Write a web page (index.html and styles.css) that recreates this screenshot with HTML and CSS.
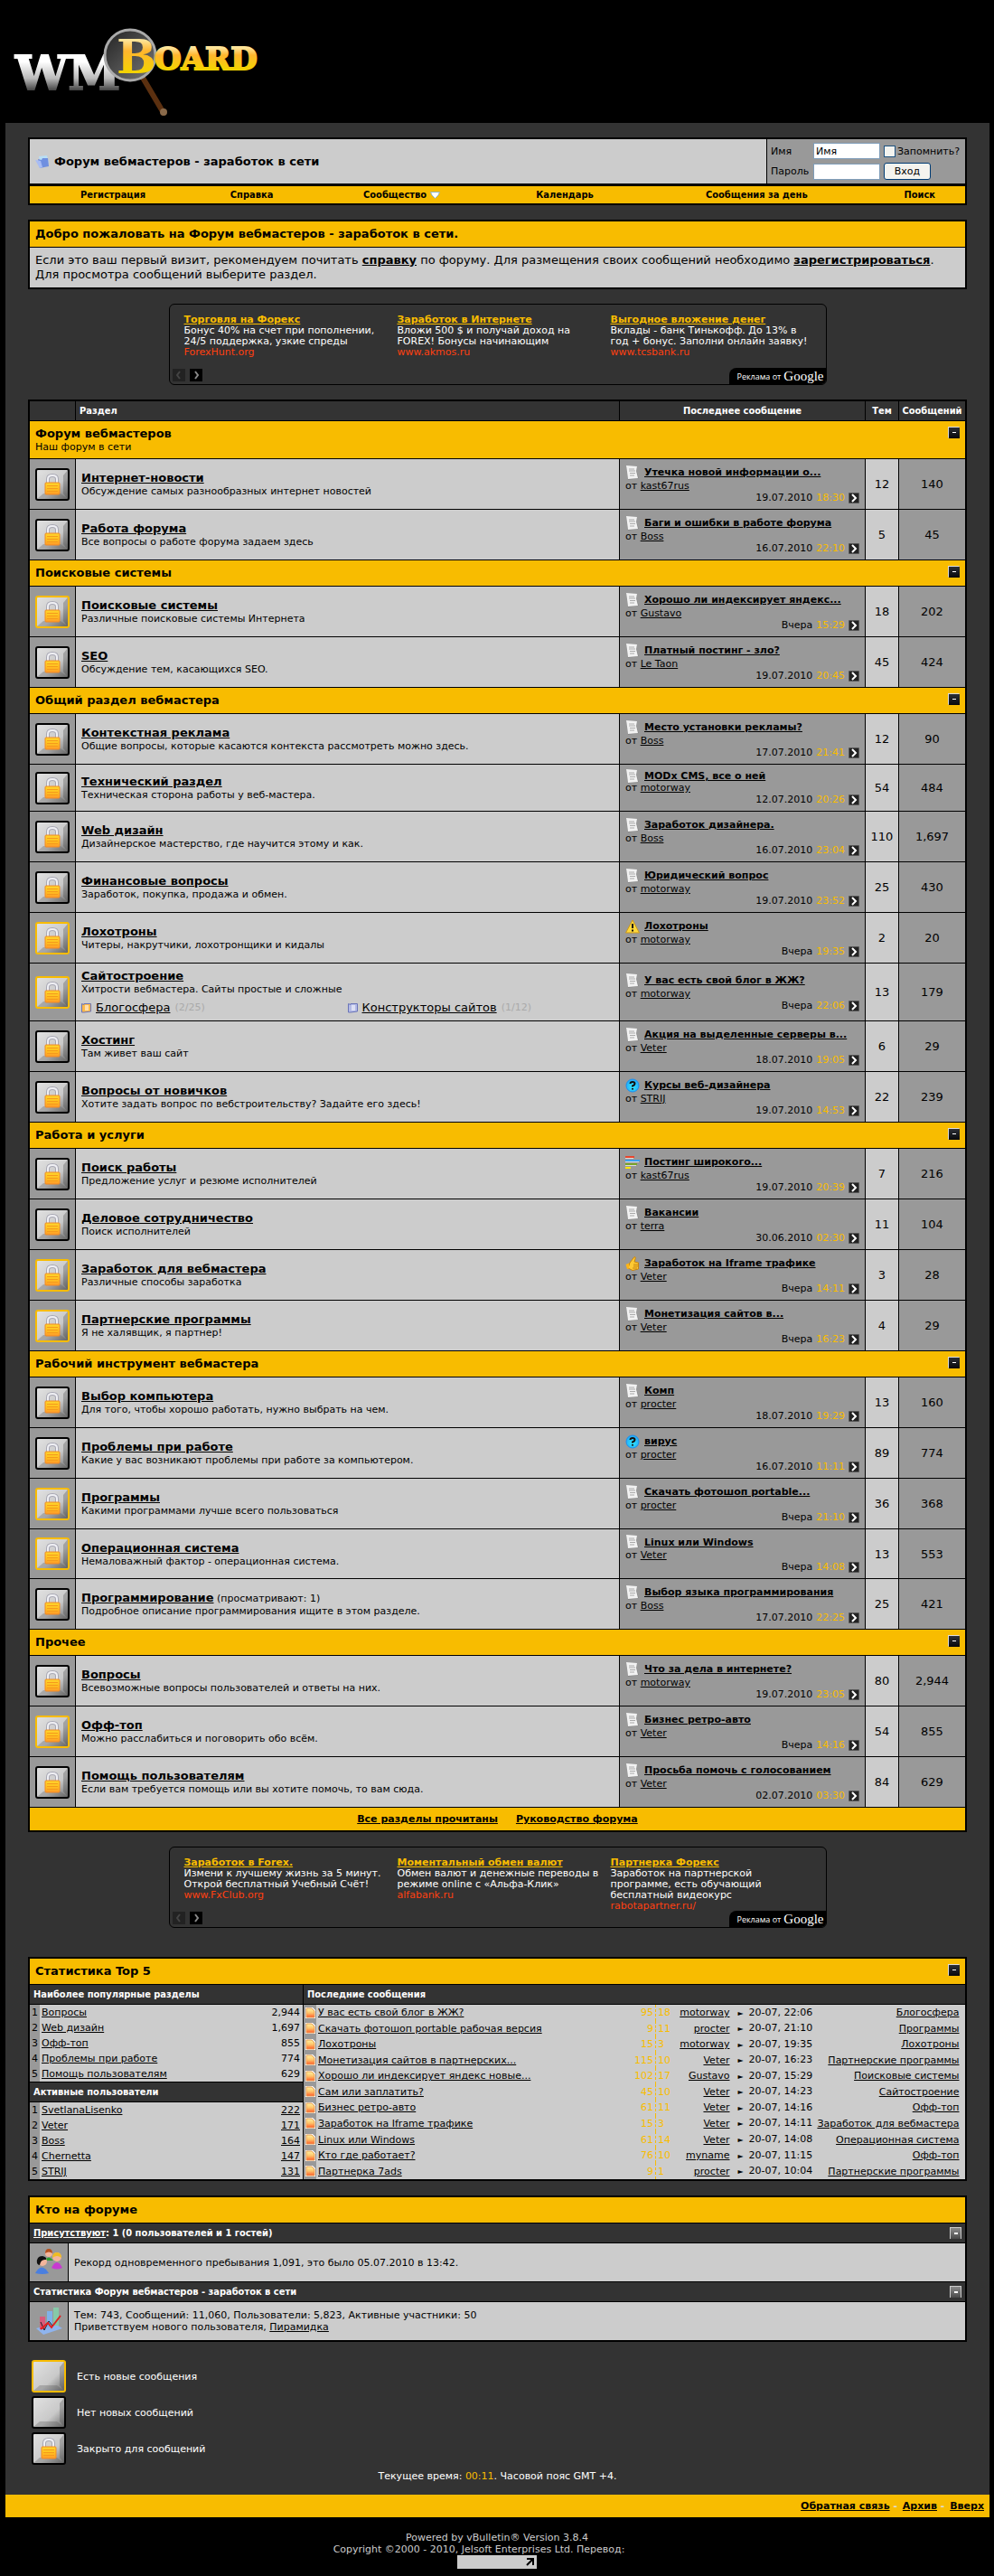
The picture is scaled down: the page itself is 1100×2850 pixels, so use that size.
FILE: index.html
```html
<!DOCTYPE html>
<html lang="ru">
<head>
  <meta charset="UTF-8">
  <title>Форум вебмастеров - заработок в сети</title>
  <link rel="stylesheet" href="styles.css">
</head>
<body>

<!-- icon sprite -->
<svg class="sprite" aria-hidden="true">
  <defs>
    <linearGradient id="tileGrad" x1="0" y1="0" x2="1" y2="1">
      <stop offset="0" stop-color="#e2e2e2"/><stop offset="0.6" stop-color="#c9c9c9"/><stop offset="1" stop-color="#666"/>
    </linearGradient>
    <linearGradient id="lockGrad" x1="0" y1="0" x2="0" y2="1">
      <stop offset="0" stop-color="#ffd52e"/><stop offset="0.5" stop-color="#ffc21f"/><stop offset="1" stop-color="#ff9a2a"/>
    </linearGradient>
    <linearGradient id="darkGrad" x1="0" y1="0" x2="0" y2="1">
      <stop offset="0" stop-color="#2c2f36"/><stop offset="1" stop-color="#08090c"/>
    </linearGradient>
    <linearGradient id="greyGrad" x1="0" y1="0" x2="0" y2="1">
      <stop offset="0" stop-color="#8a8a8a"/><stop offset="1" stop-color="#4a4a4a"/>
    </linearGradient>
    <linearGradient id="fireGrad" x1="0" y1="0" x2="0" y2="1">
      <stop offset="0" stop-color="#fff3a0"/><stop offset="0.5" stop-color="#ffc46a"/><stop offset="1" stop-color="#ff5a2a"/>
    </linearGradient>
    <radialGradient id="blueGrad" cx="0.5" cy="0.6" r="0.6">
      <stop offset="0" stop-color="#2fe6ff"/><stop offset="1" stop-color="#22a8f8"/>
    </radialGradient>
  </defs>
  <symbol id="tile" viewBox="0 0 38 36">
    <rect x="1" y="1" width="36" height="34" rx="2" fill="url(#tileGrad)" stroke="currentColor" stroke-width="2"/>
    <path d="M2 34 L9 28 H28 L36 34 Z" fill="#555" opacity="0.3"/>
    <path d="M36 2 L31 8 V28 L36 34 Z" fill="#444" opacity="0.3"/>
  </symbol>
  <symbol id="tile-lock" viewBox="0 0 38 36">
    <use href="#tile" width="38" height="36"/>
    <path d="M14 16 V12 Q14 8 19 8 Q24 8 24 12 V16" fill="none" stroke="#a8a8b4" stroke-width="4"/>
    <path d="M14 16 V12 Q14 8 19 8 Q24 8 24 12 V16" fill="none" stroke="#f0f0f4" stroke-width="2"/>
    <rect x="11" y="16" width="16" height="13" rx="1" fill="url(#lockGrad)" stroke="#f08a24"/>
    <path d="M13 19.500 H25 M13 22.500 H25 M13 25.500 H25" stroke="#f59a1c" stroke-width="1"/>
  </symbol>
  <symbol id="minus" viewBox="0 0 13 13">
    <path d="M0 13 V0 H13" fill="#ddd"/>
    <rect x="1" y="1" width="12" height="12" fill="url(#darkGrad)"/>
    <rect x="5" y="6" width="4" height="1" fill="#fff"/>
  </symbol>
  <symbol id="minus-grey" viewBox="0 0 13 13">
    <rect x="0" y="0" width="13" height="13" fill="#ccc"/>
    <rect x="1" y="1" width="11" height="12" fill="url(#greyGrad)"/>
    <rect x="5" y="6" width="4" height="2" fill="#fff"/>
  </symbol>
  <symbol id="go" viewBox="0 0 12 12">
    <rect x="0" y="0" width="12" height="12" rx="1" fill="#555"/>
    <rect x="1" y="1" width="10" height="10" fill="#222"/>
    <path d="M4 2 L8 6 L4 10" fill="none" stroke="#fff" stroke-width="2"/>
  </symbol>
  <symbol id="doc" viewBox="0 0 16 16">
    <path d="M1 1 L13 1 L12 5 L15 14 L3 16 L2 8 Z" fill="#777" opacity="0.5"/>
    <path d="M1 0 L13 1 L12 6 L14 14 L3 15 L2 7 Z" fill="#f2f2f2"/>
    <path d="M4 4 H10 M4 6 H11 M5 8.500 H11 M5 11 H10" stroke="#aaa" stroke-width="1"/>
  </symbol>
  <symbol id="warn" viewBox="0 0 16 16">
    <path d="M8 1 L15.500 15 H0.500 Z" fill="#ffd83a" stroke="#c9971a" stroke-linejoin="round"/>
    <path d="M8 5 V10 M8 11.500 V13.500" stroke="#111" stroke-width="2"/>
  </symbol>
  <symbol id="question" viewBox="0 0 16 16">
    <circle cx="8" cy="8" r="7" fill="url(#blueGrad)" stroke="#1b8ff0"/>
    <path d="M5.500 6 Q5.500 4 8 4 Q10.500 4 10.500 6 Q10.500 7.500 8 8.500 V9.500 M8 11 V12.500" fill="none" stroke="#111" stroke-width="2"/>
  </symbol>
  <symbol id="poll" viewBox="0 0 16 16">
    <rect x="0" y="1" width="10" height="2" fill="#e8452c"/><rect x="0" y="5" width="16" height="2" fill="#3aa0ee"/>
    <rect x="0" y="9" width="13" height="2" fill="#7aa52a"/><rect x="0" y="13" width="6" height="2" fill="#ffe600"/>
    <path d="M0 3.500 H9 M0 7.500 H15 M0 11.500 H12" stroke="#ddd"/>
  </symbol>
  <symbol id="thumb" viewBox="0 0 16 16">
    <path d="M5 7 L10 0.500 Q12 0.500 11 3 L10 6 L14.500 7 V14 L8 15.500 L3 13 Z" fill="#ffc933" stroke="#c78410"/>
    <path d="M0.500 9 L4 7.500 V13.500 L2 14 Z" fill="#ffb414"/>
    <path d="M9 9 H14 M9 11 H14 M8 13 H13" stroke="#c78410"/>
  </symbol>
  <symbol id="folder" viewBox="0 0 16 14">
    <path d="M4 1 L13 0 L15 8 L6 10 Z" fill="#b9def5"/>
    <path d="M3 4 L7 5 L8 3 L14 3 L15 12 L5 14 Z" fill="#6f8fe0"/>
    <path d="M0 5 L6 6 L8 13 L5 14 Z" fill="#a8bcf4"/>
  </symbol>
  <symbol id="sub" viewBox="0 0 11 12">
    <path d="M0.500 1.500 L3 2.500 V1.500 H10.500 V10 L3 11 L0.500 11 Z" fill="currentColor" stroke="#6a74b8"/>
    <rect x="4" y="3" width="4" height="6" fill="#fff" opacity="0.55"/>
  </symbol>
  <symbol id="page" viewBox="0 0 11 12">
    <path d="M0 0 H8 L11 3 V12 H0 Z" fill="#fff"/>
    <path d="M1 1 H7 L10 4 V11 H1 Z" fill="url(#fireGrad)" stroke="#e59a50" stroke-width="1"/>
  </symbol>
</svg>

<header class="header">
  <a href="#" class="logo" aria-label="WMBoard">
    <svg width="290" height="120" viewBox="0 0 290 120">
      <defs>
        <linearGradient id="silver" x1="0" y1="0" x2="0" y2="1">
          <stop offset="0.3" stop-color="#fff"/><stop offset="0.6" stop-color="#bbb"/><stop offset="0.85" stop-color="#333"/>
        </linearGradient>
        <linearGradient id="gold" x1="0" y1="0" x2="0" y2="1">
          <stop offset="0.2" stop-color="#ffe59a"/><stop offset="0.4" stop-color="#ffb52e"/><stop offset="0.8" stop-color="#f3d400"/>
        </linearGradient>
        <linearGradient id="glass" x1="0" y1="0" x2="1" y2="1">
          <stop offset="0" stop-color="#222"/><stop offset="1" stop-color="#777"/>
        </linearGradient>
      </defs>
      <path d="M148 78 L171 117" stroke="#5b3010" stroke-width="6" stroke-linecap="round"/>
      <circle cx="171" cy="116" r="4" fill="#8a6a4a"/>
      <text x="7" y="91" class="logo-wm">WM</text>
      <circle cx="134" cy="53" r="28" fill="url(#glass)" stroke="#aaa" stroke-width="3"/>
      <text x="161" y="69" class="logo-oard">OARD</text>
      <text x="119" y="73" class="logo-b">B</text>
    </svg>
  </a>
</header>

<div class="page">

  <div class="navbar">
    <div class="navbar-top">
      <h1 class="crumb"><svg class="folder"><use href="#folder"/></svg>Форум вебмастеров - заработок в сети</h1>
      <form class="login">
        <label for="user">Имя</label>
        <input class="field" type="text" id="user" value="Имя">
        <span class="remember"><input type="checkbox" id="remember"><label for="remember">Запомнить?</label></span>
        <label for="pass">Пароль</label>
        <input class="field" type="password" id="pass">
        <button class="enter" type="submit">Вход</button>
      </form>
    </div>
    <nav class="menu">
      <a href="#">Регистрация</a>
      <a href="#">Справка</a>
      <a href="#">Сообщество <svg width="11" height="8" viewBox="0 0 11 8"><path d="M0.500 0.500 H10.500 L9 4 L5.500 7.500 L2 4 Z" fill="#fff" stroke="#8fb3bd"/></svg></a>
      <a href="#">Календарь</a>
      <a href="#">Сообщения за день</a>
      <a href="#">Поиск</a>
    </nav>
  </div>

  <section class="box welcome">
    <h2 class="tcat">Добро пожаловать на Форум вебмастеров - заработок в сети.</h2>
    <p>Если это ваш первый визит, рекомендуем почитать <a href="#">справку</a> по форуму. Для размещения своих сообщений необходимо <a href="#">зарегистрироваться</a>. Для просмотра сообщений выберите раздел.</p>
  </section>

  <aside class="ads">
    <div class="ad-list">
      <div class="ad"><a href="#">Торговля на Форекс</a><p>Бонус 40% на счет при пополнении,<br>24/5 поддержка, узкие спреды</p><cite>ForexHunt.org</cite></div>
      <div class="ad"><a href="#">Заработок в Интернете</a><p>Вложи 500 $ и получай доход на<br>FOREX! Бонусы начинающим</p><cite>www.akmos.ru</cite></div>
      <div class="ad"><a href="#">Выгодное вложение денег</a><p>Вклады - банк Тинькофф. До 13% в<br>год + бонус. Заполни онлайн заявку!</p><cite>www.tcsbank.ru</cite></div>
    </div>
    <div class="ad-nav">
      <button class="prev" aria-label="Назад"><svg viewBox="0 0 14 14"><path d="M8 3 L5 7 L8 11" fill="none" stroke="currentColor" stroke-width="2"/></svg></button>
      <button aria-label="Вперёд"><svg viewBox="0 0 14 14"><path d="M6 3 L9 7 L6 11" fill="none" stroke="currentColor" stroke-width="2"/></svg></button>
      <a href="#" class="ads-tab">Реклама от <span>Google</span></a>
    </div>
  </aside>

  <table class="box forums">
    <colgroup><col class="c-icon"><col><col class="c-last"><col class="c-num"><col class="c-posts"></colgroup>
    <thead>
      <tr><th></th><th class="left">Раздел</th><th>Последнее сообщение</th><th>Тем</th><th>Сообщений</th></tr>
    </thead>
    <tbody>
      <tr class="cat"><td colspan="5"><svg class="minus"><use href="#minus"/></svg><h2>Форум вебмастеров</h2><p>Наш форум в сети</p></td></tr>
      <tr>
        <td class="icon"><svg class="tile"><use href="#tile-lock"/></svg></td>
        <td class="forum"><a href="#">Интернет-новости</a><p>Обсуждение самых разнообразных интернет новостей</p></td>
        <td class="last"><div class="topic"><svg><use href="#doc"/></svg><a href="#">Утечка новой информации о...</a></div><div>от <a href="#">kast67rus</a></div><div class="date">19.07.2010 <i>18:30</i><svg><use href="#go"/></svg></div></td>
        <td class="num">12</td><td class="posts">140</td>
      </tr>
      <tr>
        <td class="icon"><svg class="tile"><use href="#tile-lock"/></svg></td>
        <td class="forum"><a href="#">Работа форума</a><p>Все вопросы о работе форума задаем здесь</p></td>
        <td class="last"><div class="topic"><svg><use href="#doc"/></svg><a href="#">Баги и ошибки в работе форума</a></div><div>от <a href="#">Boss</a></div><div class="date">16.07.2010 <i>22:10</i><svg><use href="#go"/></svg></div></td>
        <td class="num">5</td><td class="posts">45</td>
      </tr>

      <tr class="cat"><td colspan="5"><svg class="minus"><use href="#minus"/></svg><h2>Поисковые системы</h2></td></tr>
      <tr>
        <td class="icon"><svg class="tile new"><use href="#tile-lock"/></svg></td>
        <td class="forum"><a href="#">Поисковые системы</a><p>Различные поисковые системы Интернета</p></td>
        <td class="last"><div class="topic"><svg><use href="#doc"/></svg><a href="#">Хорошо ли индексирует яндекс...</a></div><div>от <a href="#">Gustavo</a></div><div class="date">Вчера <i>15:29</i><svg><use href="#go"/></svg></div></td>
        <td class="num">18</td><td class="posts">202</td>
      </tr>
      <tr>
        <td class="icon"><svg class="tile"><use href="#tile-lock"/></svg></td>
        <td class="forum"><a href="#">SEO</a><p>Обсуждение тем, касающихся SEO.</p></td>
        <td class="last"><div class="topic"><svg><use href="#doc"/></svg><a href="#">Платный постинг - зло?</a></div><div>от <a href="#">Le Taon</a></div><div class="date">19.07.2010 <i>20:45</i><svg><use href="#go"/></svg></div></td>
        <td class="num">45</td><td class="posts">424</td>
      </tr>

      <tr class="cat"><td colspan="5"><svg class="minus"><use href="#minus"/></svg><h2>Общий раздел вебмастера</h2></td></tr>
      <tr>
        <td class="icon"><svg class="tile"><use href="#tile-lock"/></svg></td>
        <td class="forum"><a href="#">Контекстная реклама</a><p>Общие вопросы, которые касаются контекста рассмотреть можно здесь.</p></td>
        <td class="last"><div class="topic"><svg><use href="#doc"/></svg><a href="#">Место установки рекламы?</a></div><div>от <a href="#">Boss</a></div><div class="date">17.07.2010 <i>21:41</i><svg><use href="#go"/></svg></div></td>
        <td class="num">12</td><td class="posts">90</td>
      </tr>
      <tr>
        <td class="icon"><svg class="tile"><use href="#tile-lock"/></svg></td>
        <td class="forum"><a href="#">Технический раздел</a><p>Техническая сторона работы у веб-мастера.</p></td>
        <td class="last"><div class="topic tight"><svg><use href="#doc"/></svg><a href="#">MODx CMS, все о ней</a></div><div>от <a href="#">motorway</a></div><div class="date">12.07.2010 <i>20:26</i><svg><use href="#go"/></svg></div></td>
        <td class="num">54</td><td class="posts">484</td>
      </tr>
      <tr>
        <td class="icon"><svg class="tile"><use href="#tile-lock"/></svg></td>
        <td class="forum"><a href="#">Web дизайн</a><p>Дизайнерское мастерство, где научится этому и как.</p></td>
        <td class="last"><div class="topic"><svg><use href="#doc"/></svg><a href="#">Заработок дизайнера.</a></div><div>от <a href="#">Boss</a></div><div class="date">16.07.2010 <i>23:04</i><svg><use href="#go"/></svg></div></td>
        <td class="num">110</td><td class="posts">1,697</td>
      </tr>
      <tr>
        <td class="icon"><svg class="tile"><use href="#tile-lock"/></svg></td>
        <td class="forum"><a href="#">Финансовые вопросы</a><p>Заработок, покупка, продажа и обмен.</p></td>
        <td class="last"><div class="topic"><svg><use href="#doc"/></svg><a href="#">Юридический вопрос</a></div><div>от <a href="#">motorway</a></div><div class="date">19.07.2010 <i>23:52</i><svg><use href="#go"/></svg></div></td>
        <td class="num">25</td><td class="posts">430</td>
      </tr>
      <tr>
        <td class="icon"><svg class="tile new"><use href="#tile-lock"/></svg></td>
        <td class="forum"><a href="#">Лохотроны</a><p>Читеры, накрутчики, лохотронщики и кидалы</p></td>
        <td class="last"><div class="topic"><svg><use href="#warn"/></svg><a href="#">Лохотроны</a></div><div>от <a href="#">motorway</a></div><div class="date">Вчера <i>19:35</i><svg><use href="#go"/></svg></div></td>
        <td class="num">2</td><td class="posts">20</td>
      </tr>
      <tr>
        <td class="icon"><svg class="tile new"><use href="#tile-lock"/></svg></td>
        <td class="forum"><a href="#">Сайтостроение</a><p>Хитрости вебмастера. Сайты простые и сложные</p>
          <div class="subs">
            <span><svg class="fresh"><use href="#sub"/></svg><a href="#">Блогосфера</a> <small>(2/25)</small></span>
            <span><svg><use href="#sub"/></svg><a href="#">Конструкторы сайтов</a> <small>(1/12)</small></span>
          </div>
        </td>
        <td class="last"><div class="topic"><svg><use href="#doc"/></svg><a href="#">У вас есть свой блог в ЖЖ?</a></div><div>от <a href="#">motorway</a></div><div class="date">Вчера <i>22:06</i><svg><use href="#go"/></svg></div></td>
        <td class="num">13</td><td class="posts">179</td>
      </tr>
      <tr>
        <td class="icon"><svg class="tile"><use href="#tile-lock"/></svg></td>
        <td class="forum"><a href="#">Хостинг</a><p>Там живет ваш сайт</p></td>
        <td class="last"><div class="topic"><svg><use href="#doc"/></svg><a href="#">Акция на выделенные серверы в...</a></div><div>от <a href="#">Veter</a></div><div class="date">18.07.2010 <i>19:05</i><svg><use href="#go"/></svg></div></td>
        <td class="num">6</td><td class="posts">29</td>
      </tr>
      <tr>
        <td class="icon"><svg class="tile"><use href="#tile-lock"/></svg></td>
        <td class="forum"><a href="#">Вопросы от новичков</a><p>Хотите задать вопрос по вебстроительству? Задайте его здесь!</p></td>
        <td class="last"><div class="topic"><svg><use href="#question"/></svg><a href="#">Курсы веб-дизайнера</a></div><div>от <a href="#">STRIJ</a></div><div class="date">19.07.2010 <i>14:53</i><svg><use href="#go"/></svg></div></td>
        <td class="num">22</td><td class="posts">239</td>
      </tr>

      <tr class="cat"><td colspan="5"><svg class="minus"><use href="#minus"/></svg><h2>Работа и услуги</h2></td></tr>
      <tr>
        <td class="icon"><svg class="tile"><use href="#tile-lock"/></svg></td>
        <td class="forum"><a href="#">Поиск работы</a><p>Предложение услуг и резюме исполнителей</p></td>
        <td class="last"><div class="topic"><svg><use href="#poll"/></svg><a href="#">Постинг широкого...</a></div><div>от <a href="#">kast67rus</a></div><div class="date">19.07.2010 <i>20:39</i><svg><use href="#go"/></svg></div></td>
        <td class="num">7</td><td class="posts">216</td>
      </tr>
      <tr>
        <td class="icon"><svg class="tile"><use href="#tile-lock"/></svg></td>
        <td class="forum"><a href="#">Деловое сотрудничество</a><p>Поиск исполнителей</p></td>
        <td class="last"><div class="topic"><svg><use href="#doc"/></svg><a href="#">Вакансии</a></div><div>от <a href="#">terra</a></div><div class="date">30.06.2010 <i>02:30</i><svg><use href="#go"/></svg></div></td>
        <td class="num">11</td><td class="posts">104</td>
      </tr>
      <tr>
        <td class="icon"><svg class="tile new"><use href="#tile-lock"/></svg></td>
        <td class="forum"><a href="#">Заработок для вебмастера</a><p>Различные способы заработка</p></td>
        <td class="last"><div class="topic"><svg><use href="#thumb"/></svg><a href="#">Заработок на Iframe трафике</a></div><div>от <a href="#">Veter</a></div><div class="date">Вчера <i>14:11</i><svg><use href="#go"/></svg></div></td>
        <td class="num">3</td><td class="posts">28</td>
      </tr>
      <tr>
        <td class="icon"><svg class="tile new"><use href="#tile-lock"/></svg></td>
        <td class="forum"><a href="#">Партнерские программы</a><p>Я не халявщик, я партнер!</p></td>
        <td class="last"><div class="topic"><svg><use href="#doc"/></svg><a href="#">Монетизация сайтов в...</a></div><div>от <a href="#">Veter</a></div><div class="date">Вчера <i>16:23</i><svg><use href="#go"/></svg></div></td>
        <td class="num">4</td><td class="posts">29</td>
      </tr>

      <tr class="cat"><td colspan="5"><svg class="minus"><use href="#minus"/></svg><h2>Рабочий инструмент вебмастера</h2></td></tr>
      <tr>
        <td class="icon"><svg class="tile"><use href="#tile-lock"/></svg></td>
        <td class="forum"><a href="#">Выбор компьютера</a><p>Для того, чтобы хорошо работать, нужно выбрать на чем.</p></td>
        <td class="last"><div class="topic"><svg><use href="#doc"/></svg><a href="#">Комп</a></div><div>от <a href="#">procter</a></div><div class="date">18.07.2010 <i>19:29</i><svg><use href="#go"/></svg></div></td>
        <td class="num">13</td><td class="posts">160</td>
      </tr>
      <tr>
        <td class="icon"><svg class="tile"><use href="#tile-lock"/></svg></td>
        <td class="forum"><a href="#">Проблемы при работе</a><p>Какие у вас возникают проблемы при работе за компьютером.</p></td>
        <td class="last"><div class="topic"><svg><use href="#question"/></svg><a href="#">вирус</a></div><div>от <a href="#">procter</a></div><div class="date">16.07.2010 <i>11:11</i><svg><use href="#go"/></svg></div></td>
        <td class="num">89</td><td class="posts">774</td>
      </tr>
      <tr>
        <td class="icon"><svg class="tile new"><use href="#tile-lock"/></svg></td>
        <td class="forum"><a href="#">Программы</a><p>Какими программами лучше всего пользоваться</p></td>
        <td class="last"><div class="topic"><svg><use href="#doc"/></svg><a href="#">Скачать фотошоп portable...</a></div><div>от <a href="#">procter</a></div><div class="date">Вчера <i>21:10</i><svg><use href="#go"/></svg></div></td>
        <td class="num">36</td><td class="posts">368</td>
      </tr>
      <tr>
        <td class="icon"><svg class="tile new"><use href="#tile-lock"/></svg></td>
        <td class="forum"><a href="#">Операционная система</a><p>Немаловажный фактор - операционная система.</p></td>
        <td class="last"><div class="topic snug"><svg><use href="#doc"/></svg><a href="#">Linux или Windows</a></div><div>от <a href="#">Veter</a></div><div class="date">Вчера <i>14:08</i><svg><use href="#go"/></svg></div></td>
        <td class="num">13</td><td class="posts">553</td>
      </tr>
      <tr>
        <td class="icon"><svg class="tile"><use href="#tile-lock"/></svg></td>
        <td class="forum"><a href="#">Программирование</a> (просматривают: 1)<p>Подробное описание программирования ищите в этом разделе.</p></td>
        <td class="last"><div class="topic"><svg><use href="#doc"/></svg><a href="#">Выбор языка программирования</a></div><div>от <a href="#">Boss</a></div><div class="date">17.07.2010 <i>22:25</i><svg><use href="#go"/></svg></div></td>
        <td class="num">25</td><td class="posts">421</td>
      </tr>

      <tr class="cat"><td colspan="5"><svg class="minus"><use href="#minus"/></svg><h2>Прочее</h2></td></tr>
      <tr>
        <td class="icon"><svg class="tile"><use href="#tile-lock"/></svg></td>
        <td class="forum"><a href="#">Вопросы</a><p>Всевозможные вопросы пользователей и ответы на них.</p></td>
        <td class="last"><div class="topic"><svg><use href="#doc"/></svg><a href="#">Что за дела в интернете?</a></div><div>от <a href="#">motorway</a></div><div class="date">19.07.2010 <i>23:05</i><svg><use href="#go"/></svg></div></td>
        <td class="num">80</td><td class="posts">2,944</td>
      </tr>
      <tr>
        <td class="icon"><svg class="tile new"><use href="#tile-lock"/></svg></td>
        <td class="forum"><a href="#">Офф-топ</a><p>Можно расслабиться и поговорить обо всём.</p></td>
        <td class="last"><div class="topic"><svg><use href="#doc"/></svg><a href="#">Бизнес ретро-авто</a></div><div>от <a href="#">Veter</a></div><div class="date">Вчера <i>14:16</i><svg><use href="#go"/></svg></div></td>
        <td class="num">54</td><td class="posts">855</td>
      </tr>
      <tr>
        <td class="icon"><svg class="tile"><use href="#tile-lock"/></svg></td>
        <td class="forum"><a href="#">Помощь пользователям</a><p>Если вам требуется помощь или вы хотите помочь, то вам сюда.</p></td>
        <td class="last"><div class="topic"><svg><use href="#doc"/></svg><a href="#">Просьба помочь с голосованием</a></div><div>от <a href="#">Veter</a></div><div class="date">02.07.2010 <i>03:30</i><svg><use href="#go"/></svg></div></td>
        <td class="num">84</td><td class="posts">629</td>
      </tr>
    </tbody>
    <tfoot>
      <tr><td colspan="5"><a href="#">Все разделы прочитаны</a><a href="#">Руководство форума</a></td></tr>
    </tfoot>
  </table>

  <aside class="ads ads-bottom">
    <div class="ad-list">
      <div class="ad"><a href="#">Заработок в Forex.</a><p>Измени к лучшему жизнь за 5 минут.<br>Открой бесплатный Учебный Счёт!</p><cite>www.FxClub.org</cite></div>
      <div class="ad"><a href="#">Моментальный обмен валют</a><p>Обмен валют и денежные переводы в<br>режиме online с «Альфа-Клик»</p><cite>alfabank.ru</cite></div>
      <div class="ad"><a href="#">Партнерка Форекс</a><p>Заработок на партнерской<br>программе, есть обучающий<br>бесплатный видеокурс</p><cite>rabotapartner.ru/</cite></div>
    </div>
    <div class="ad-nav">
      <button class="prev" aria-label="Назад"><svg viewBox="0 0 14 14"><path d="M8 3 L5 7 L8 11" fill="none" stroke="currentColor" stroke-width="2"/></svg></button>
      <button aria-label="Вперёд"><svg viewBox="0 0 14 14"><path d="M6 3 L9 7 L6 11" fill="none" stroke="currentColor" stroke-width="2"/></svg></button>
      <a href="#" class="ads-tab">Реклама от <span>Google</span></a>
    </div>
  </aside>

  <section class="box stats">
    <h2 class="tcat">Статистика Top 5<svg class="minus"><use href="#minus"/></svg></h2>
    <div class="stats-body">
      <div class="top5">
        <h3 class="thead">Наиболее популярные разделы</h3>
        <table>
          <tr><td>1</td><td><a href="#">Вопросы</a></td><td>2,944</td></tr>
          <tr><td>2</td><td><a href="#">Web дизайн</a></td><td>1,697</td></tr>
          <tr><td>3</td><td><a href="#">Офф-топ</a></td><td>855</td></tr>
          <tr><td>4</td><td><a href="#">Проблемы при работе</a></td><td>774</td></tr>
          <tr><td>5</td><td><a href="#">Помощь пользователям</a></td><td>629</td></tr>
        </table>
        <h3 class="thead">Активные пользователи</h3>
        <table>
          <tr><td>1</td><td><a href="#">SvetlanaLisenko</a></td><td><a href="#">222</a></td></tr>
          <tr><td>2</td><td><a href="#">Veter</a></td><td><a href="#">171</a></td></tr>
          <tr><td>3</td><td><a href="#">Boss</a></td><td><a href="#">164</a></td></tr>
          <tr><td>4</td><td><a href="#">Chernetta</a></td><td><a href="#">147</a></td></tr>
          <tr><td>5</td><td><a href="#">STRIJ</a></td><td><a href="#">131</a></td></tr>
        </table>
      </div>
      <div class="recent">
        <h3 class="thead">Последние сообщения</h3>
        <table>
          <colgroup><col class="r-icon"><col><col class="r-views"><col class="r-replies"><col class="r-user"><col class="r-time"><col class="r-forum"></colgroup>
          <tr><td><svg><use href="#page"/></svg></td><td><a href="#">У вас есть свой блог в ЖЖ?</a></td><td>95</td><td>18</td><td><a href="#">motorway</a></td><td><b>►</b>20-07, 22:06</td><td><a href="#">Блогосфера</a></td></tr>
          <tr><td><svg><use href="#page"/></svg></td><td><a href="#">Скачать фотошоп portable рабочая версия</a></td><td>9</td><td>11</td><td><a href="#">procter</a></td><td><b>►</b>20-07, 21:10</td><td><a href="#">Программы</a></td></tr>
          <tr><td><svg><use href="#page"/></svg></td><td><a href="#">Лохотроны</a></td><td>15</td><td>3</td><td><a href="#">motorway</a></td><td><b>►</b>20-07, 19:35</td><td><a href="#">Лохотроны</a></td></tr>
          <tr><td><svg><use href="#page"/></svg></td><td><a href="#">Монетизация сайтов в партнерских...</a></td><td>115</td><td>10</td><td><a href="#">Veter</a></td><td><b>►</b>20-07, 16:23</td><td><a href="#">Партнерские программы</a></td></tr>
          <tr><td><svg><use href="#page"/></svg></td><td><a href="#">Хорошо ли индексирует яндекс новые...</a></td><td>102</td><td>17</td><td><a href="#">Gustavo</a></td><td><b>►</b>20-07, 15:29</td><td><a href="#">Поисковые системы</a></td></tr>
          <tr><td><svg><use href="#page"/></svg></td><td><a href="#">Сам или заплатить?</a></td><td>45</td><td>10</td><td><a href="#">Veter</a></td><td><b>►</b>20-07, 14:23</td><td><a href="#">Сайтостроение</a></td></tr>
          <tr><td><svg><use href="#page"/></svg></td><td><a href="#">Бизнес ретро-авто</a></td><td>61</td><td>11</td><td><a href="#">Veter</a></td><td><b>►</b>20-07, 14:16</td><td><a href="#">Офф-топ</a></td></tr>
          <tr><td><svg><use href="#page"/></svg></td><td><a href="#">Заработок на Iframe трафике</a></td><td>15</td><td>3</td><td><a href="#">Veter</a></td><td><b>►</b>20-07, 14:11</td><td><a href="#">Заработок для вебмастера</a></td></tr>
          <tr><td><svg><use href="#page"/></svg></td><td><a href="#">Linux или Windows</a></td><td>61</td><td>14</td><td><a href="#">Veter</a></td><td><b>►</b>20-07, 14:08</td><td><a href="#">Операционная система</a></td></tr>
          <tr><td><svg><use href="#page"/></svg></td><td><a href="#">Кто где работает?</a></td><td>76</td><td>10</td><td><a href="#">myname</a></td><td><b>►</b>20-07, 11:15</td><td><a href="#">Офф-топ</a></td></tr>
          <tr><td><svg><use href="#page"/></svg></td><td><a href="#">Партнерка 7ads</a></td><td>9</td><td>1</td><td><a href="#">procter</a></td><td><b>►</b>20-07, 10:04</td><td><a href="#">Партнерские программы</a></td></tr>
        </table>
      </div>
    </div>
  </section>

  <section class="box who">
    <h2 class="tcat">Кто на форуме</h2>
    <h3 class="thead"><span><a href="#">Присутствуют</a>: 1 (0 пользователей и 1 гостей)</span><svg class="minus"><use href="#minus-grey"/></svg></h3>
    <div class="who-row">
      <div class="who-icon">
        <svg width="30" height="28" viewBox="0 0 30 28">
          <path d="M10 13 Q15 6 20 13 Z" fill="#2f9e2f"/><circle cx="15" cy="5" r="4" fill="#f3b59b"/><path d="M11 5 Q11 0 15 0 Q19 0 19 5 Q15 2 11 5" fill="#b5501c"/>
          <path d="M18 21 Q24 9 30 21 Q24 24 18 21 Z" fill="#c83ad0"/><circle cx="24" cy="9" r="5" fill="#f3b59b"/><path d="M19 10 Q19 4 24 4 Q29 4 29 10 Q24 6 19 10" fill="#eebc22"/>
          <path d="M0 27 Q7 14 15 27 Q8 29 0 27 Z" fill="#4a7fe0"/><circle cx="8" cy="14" r="5" fill="#f3b59b"/><path d="M2 16 Q1 8 8 8 Q13 9 12 12 Q6 11 5 18 Q3 18 2 16" fill="#111"/>
        </svg>
      </div>
      <p>Рекорд одновременного пребывания 1,091, это было 05.07.2010 в 13:42.</p>
    </div>
    <h3 class="thead"><span>Статистика Форум вебмастеров - заработок в сети</span><svg class="minus"><use href="#minus-grey"/></svg></h3>
    <div class="who-row">
      <div class="who-icon">
        <svg width="30" height="30" viewBox="0 0 30 30">
          <path d="M1 23 L22 18 L30 23 L9 30 Z" fill="#8fb4ee"/>
          <rect x="5" y="10" width="6" height="14" fill="#d95a7a"/><rect x="13" y="4" width="6" height="18" fill="#7fb2ea"/><rect x="20" y="0" width="6" height="20" fill="#86c9a8"/>
          <path d="M6 16 L10 25 L15 15 L19 20" fill="none" stroke="#222" stroke-width="1"/>
          <path d="M6 24 L14 17 L18 22 L28 9" fill="none" stroke="#e02020" stroke-width="2"/>
        </svg>
      </div>
      <p>Тем: 743, Сообщений: 11,060, Пользователи: 5,823, Активные участники: 50<br>Приветствуем нового пользователя, <a href="#">Пирамидка</a></p>
    </div>
  </section>

  <ul class="legend">
    <li><svg class="tile new"><use href="#tile"/></svg>Есть новые сообщения</li>
    <li><svg class="tile"><use href="#tile"/></svg>Нет новых сообщений</li>
    <li><svg class="tile"><use href="#tile-lock"/></svg>Закрыто для сообщений</li>
  </ul>

  <p class="clock">Текущее время: <i>00:11</i>. Часовой пояс GMT +4.</p>

  <div class="bottom-bar"><a href="#">Обратная связь</a> - <a href="#">Архив</a> - <a href="#">Вверх</a></div>
</div>

<footer class="footer">
  <p>Powered by vBulletin® Version 3.8.4</p>
  <p class="copyright">Copyright ©2000 - 2010, Jelsoft Enterprises Ltd. Перевод:</p>
  <a href="#" class="badge" aria-label="Перевод"><svg width="9" height="9" viewBox="0 0 9 9"><path d="M1 1 H8 V8 M8 1 L1 8" fill="none" stroke="#000" stroke-width="2"/></svg></a>
</footer>

</body>
</html>
```
FILE: styles.css
```css
* { box-sizing: border-box; }
body {
  margin: 0;
  background: #000;
  color: #000;
  font-family: Verdana, "DejaVu Sans", sans-serif;
  font-size: 11px;
  line-height: 13px;
}
h1, h2, h3, p, ul { margin: 0; padding: 0; font-size: inherit; }
a { color: inherit; }
svg { display: block; flex: none; }
i, cite { font-style: normal; }
button { cursor: pointer; padding: 0; }
.sprite { position: absolute; width: 0; height: 0; }

/* header */
.header { padding: 8px 10px; height: 136px; }
.logo { display: inline-block; }
.logo-wm { font: bold 52px "DejaVu Serif", serif; fill: url(#silver); stroke: url(#silver); stroke-width: 2px; }
.logo-oard { font: bold 34px "DejaVu Serif", serif; fill: url(#gold); stroke: url(#gold); stroke-width: 2px; }
.logo-b { font: bold 52px "DejaVu Serif", serif; fill: url(#gold); }

.page {
  margin: 0 5px 0 6px;
  padding-top: 16px;
  background: #333;
}
.box {
  margin: 0 25px 16px;
  border: 2px solid #000;
  background: #000;
}
.tcat {
  display: flex;
  justify-content: space-between;
  padding: 6px;
  background: #f8bc00;
  font-size: 13px;
  line-height: 16px;
}
.thead, .forums th, .menu {
  font-family: Tahoma, "DejaVu Sans Condensed", sans-serif;
  font-size: 11px;
  font-weight: bold;
}
.thead {
  display: flex;
  justify-content: space-between;
  padding: 4px;
  background: #333;
  color: #fff;
}
.minus { width: 13px; height: 13px; }

/* navbar */
.navbar {
  margin: 0 25px 16px;
  border: 2px solid #000;
  background: #000;
}
.navbar-top {
  display: flex;
  gap: 1px;
  margin-bottom: 3px;
}
.crumb {
  flex: 1;
  display: flex;
  align-items: center;
  gap: 5px;
  padding: 6px;
  background: #ccc;
  font-size: 13px;
}
.folder { width: 16px; height: 14px; }
.login {
  display: grid;
  grid-template-columns: 43px 74px auto;
  align-items: center;
  gap: 4px;
  padding: 4px;
  width: 219px;
  background: #999;
}
.field {
  width: 74px;
  height: 18px;
  padding: 0 2px;
  border: 1px solid #7f9db9;
  background: #fff;
  font: inherit;
}
.remember { display: flex; align-items: center; gap: 2px; }
.remember input {
  appearance: none;
  width: 13px;
  height: 13px;
  margin: 0;
  border: 1px solid #1d5281;
  background: #f3f3ef;
}
.enter {
  width: 52px;
  height: 19px;
  border: 1px solid #003c74;
  border-radius: 3px;
  background: #f4f3ee;
  color: #000;
  font: inherit;
}
.menu {
  display: grid;
  grid-template-columns: 179fr 130fr 204fr 159fr 268fr 95fr;
  padding: 3px;
  background: #f8bc00;
}
.menu a {
  display: flex;
  justify-content: center;
  align-items: center;
  gap: 4px;
  text-decoration: none;
}

/* welcome */
.welcome p {
  margin-top: 1px;
  padding: 6px;
  background: #ccc;
  font-size: 13px;
  line-height: 16px;
}
.welcome a { font-weight: bold; }

/* ads */
.ads {
  width: 728px;
  height: 90px;
  margin: 0 auto 16px;
  border: 1px solid #000;
  border-radius: 6px;
  display: flex;
  flex-direction: column;
  justify-content: space-between;
  overflow: hidden;
}
.ads-bottom { margin-bottom: 32px; }
.ad-list { display: flex; height: 70px; padding: 10px 0 0 16px; }
.ad { width: 236px; color: #fff; line-height: 12px; }
.ad a { color: #f8bc00; font-weight: bold; line-height: 13px; }
.ad cite { color: #ff4010; }
.ad-nav { display: flex; align-items: flex-end; gap: 5px; padding-left: 3px; height: 18px; }
.ad-nav button {
  width: 14px;
  height: 14px;
  margin-bottom: 3px;
  border: 0;
  background: #000;
  color: #888;
}
.ad-nav .prev { background: #222; color: #444; }
.ads-tab {
  display: flex;
  align-items: center;
  gap: 3px;
  height: 18px;
  margin-left: auto;
  padding: 0 2px 0 8px;
  border-radius: 8px 0 0 0;
  background: #000;
  color: #fff;
  font-family: "Open Sans", sans-serif;
  font-size: 9px;
  text-decoration: none;
}
.ads-tab span { font-family: "Liberation Serif", serif; font-size: 15px; }

/* forum list */
.forums {
  width: calc(100% - 50px);
  border: 1px solid #000;
  border-spacing: 1px;
  table-layout: fixed;
}
.c-icon { width: 50px; }
.c-last { width: 271px; }
.c-num { width: 36px; }
.c-posts { width: 73px; }
.forums th {
  padding: 4px 0;
  background: #333;
  color: #fff;
}
.forums .left { padding-left: 4px; text-align: left; }
.forums td { padding: 6px; background: #ccc; }
.forums .cat td, .forums tfoot td { background: #f8bc00; }
.cat h2, .forum > a { font-size: 13px; line-height: 16px; font-weight: bold; }
.cat .minus { float: right; }
.forums td.icon, .forums td.last, .forums td.posts { background: #999; }
.forums .tile { width: 38px; height: 36px; }
.tile { color: #000; }
.tile.new { color: #f8bc00; }
.topic { display: flex; align-items: center; gap: 5px; height: 17px; }
.topic.tight { height: 13px; }
.topic.snug { height: 16px; }
.topic svg { width: 16px; height: 16px; }
.topic a { font-weight: bold; white-space: nowrap; }
.date { display: flex; justify-content: flex-end; align-items: center; gap: 4px; }
.date i, .clock i { color: #f8bc00; }
.date svg { width: 12px; height: 12px; }
.num, .posts { font-size: 13px; text-align: center; }
.forums .num, .forums .posts { padding: 0; }
.subs { display: grid; grid-template-columns: 1fr 1fr; margin-top: 5px; }
.subs span { display: flex; align-items: center; gap: 5px; font-size: 13px; line-height: 17px; }
.subs svg { width: 11px; height: 12px; color: #b4bbe6; }
.subs .fresh { color: #ffb94a; }
.subs small { font-size: 11px; color: #aaa; }
.forums tfoot td { text-align: center; font-weight: bold; }
.forums tfoot a { margin: 0 10px; }

/* top 5 */
.stats-body { display: flex; gap: 1px; margin-top: 1px; }
.stats table {
  width: 100%;
  border-collapse: collapse;
  background: #ccc;
}
.stats td { padding: 0; white-space: nowrap; }
.top5 { width: 302px; }
.top5 table { margin: 1px 0; }
.top5 table:last-child { margin-bottom: 0; }
.top5 td { height: 17px; }
.top5 td:first-child { width: 11px; background: #999; text-align: center; }
.top5 td:nth-child(2) { padding-left: 2px; }
.top5 td:last-child { padding-right: 3px; text-align: right; }
.recent { flex: 1; display: flex; flex-direction: column; gap: 1px; }
.recent table { flex: 1; table-layout: fixed; }
.r-icon { width: 14px; }
.r-views { width: 30px; }
.r-replies { width: 22px; }
.r-user { width: 60px; }
.r-time { width: 96px; }
.r-forum { width: 164px; }
.recent td:first-child { background: #999; }
.recent td svg { width: 11px; height: 12px; margin: 0 auto; }
.recent td:nth-child(2) { padding-left: 2px; }
.recent td:nth-child(3), .recent td:nth-child(4) { color: #f8bc00; }
.recent td:nth-child(3) { padding-right: 2px; border-right: 1px dashed #f8bc00; text-align: right; }
.recent td:nth-child(4) { padding-left: 2px; }
.recent td:nth-child(5), .recent td:nth-child(7) { text-align: right; }
.recent td:nth-child(6) { padding-left: 9px; }
.recent td:nth-child(7) { padding-right: 6px; }
.recent b { display: inline-block; width: 12px; font-size: 8px; font-weight: normal; }

/* who is online */
.who .thead { margin: 1px 0; }
.who-row { display: flex; gap: 1px; }
.who-icon { padding: 6px; width: 42px; height: 42px; background: #999; }
.who-row p {
  flex: 1;
  display: block;
  align-content: center;
  padding: 6px;
  background: #ccc;
}

.legend { margin: 0 29px; padding-top: 2px; list-style: none; color: #fff; }
.legend li { display: flex; align-items: center; gap: 12px; height: 40px; }
.legend .tile { width: 38px; height: 36px; }
.clock { margin: 4px 0 14px; color: #fff; text-align: center; }
.bottom-bar {
  padding: 6px;
  background: #f8bc00;
  color: #ddd;
  font-weight: bold;
  text-align: right;
}
.bottom-bar a { color: #000; margin-left: 2px; }

.footer { padding: 16px 0 6px; color: #ccc; text-align: center; }
.copyright { padding-right: 40px; }
.badge {
  display: flex;
  justify-content: flex-end;
  align-items: center;
  width: 88px;
  height: 15px;
  margin: 0 auto;
  padding-right: 3px;
  background: #ccc;
}
```
